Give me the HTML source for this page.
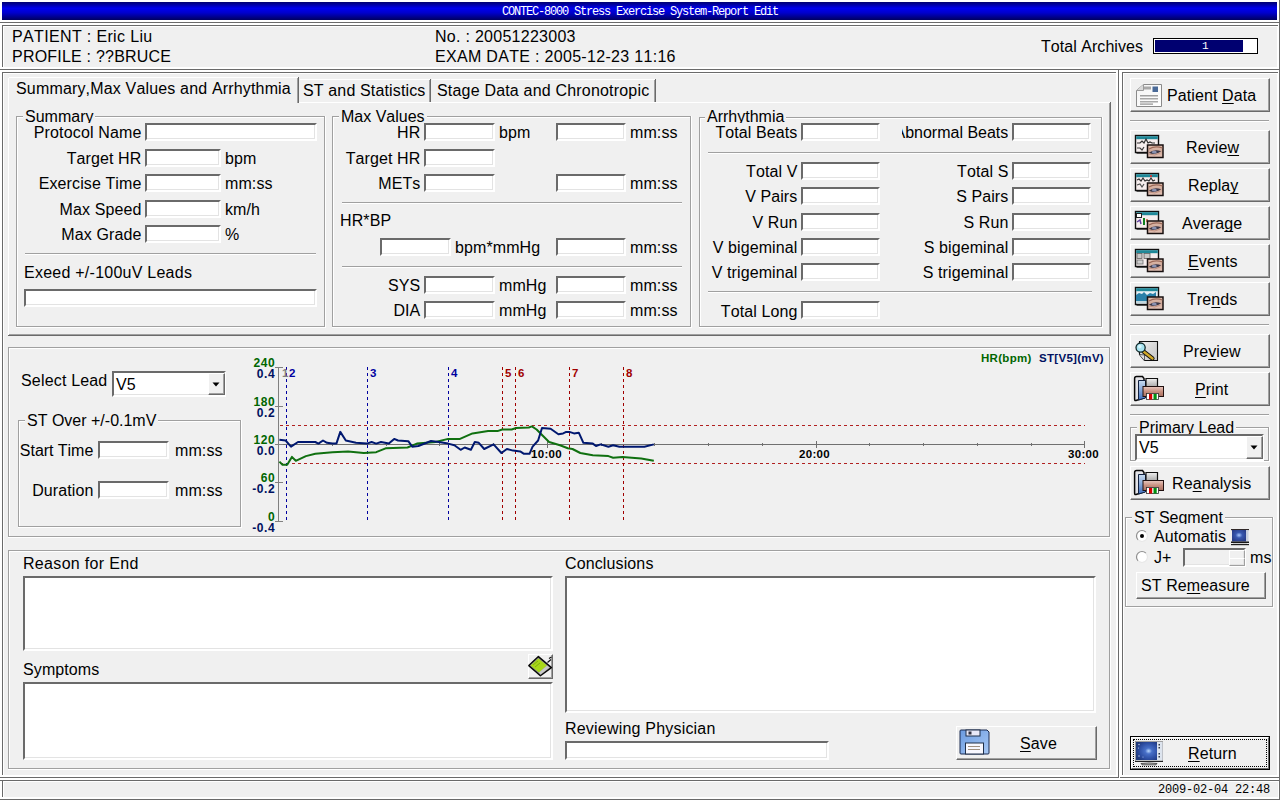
<!DOCTYPE html>
<html><head><meta charset="utf-8"><style>
html,body{margin:0;padding:0;}
body{width:1280px;height:800px;position:relative;overflow:hidden;background:#fff;font-family:"Liberation Sans",sans-serif;}
body div, body span, body svg{position:absolute;}
span{white-space:pre;font-kerning:none;}
u{text-decoration:underline;text-underline-offset:2px;text-decoration-skip-ink:none;}
</style></head><body>
<div style="left:2px;top:2px;width:1275px;height:18px;background:linear-gradient(#000070 0%,#0000ee 35%,#0000cc 60%,#000060 100%);"></div>
<span style="left:502px;top:6.34px;font-size:12px;line-height:12px;color:#fff;font-weight:normal;font-family:'Liberation Mono', monospace;letter-spacing:-1.2px;">CONTEC-8000 Stress Exercise System-Report Edit</span>
<div style="left:1279px;top:0px;width:1px;height:800px;background:#6a6a6a;"></div>
<div style="left:0px;top:22px;width:1280px;height:1px;background:#6a6a6a;"></div>
<div style="left:4px;top:27px;width:1273px;height:40px;background:#f0f0f0;"></div>
<div style="left:2px;top:25px;width:1276px;height:1px;background:#6a6a6a;"></div>
<div style="left:2px;top:25px;width:1px;height:42px;background:#6a6a6a;"></div>
<div style="left:3px;top:26px;width:1274px;height:1px;background:#fff;"></div>
<div style="left:3px;top:26px;width:1px;height:41px;background:#fff;"></div>
<div style="left:0px;top:69px;width:1280px;height:1px;background:#6a6a6a;"></div>
<div style="left:4px;top:74px;width:1112px;height:701px;background:#f0f0f0;"></div>
<div style="left:2px;top:72px;width:1114px;height:1px;background:#6a6a6a;"></div>
<div style="left:2px;top:72px;width:1px;height:703px;background:#6a6a6a;"></div>
<div style="left:3px;top:73px;width:1113px;height:1px;background:#fff;"></div>
<div style="left:3px;top:73px;width:1px;height:702px;background:#fff;"></div>
<div style="left:1118px;top:69px;width:1px;height:709px;background:#6a6a6a;"></div>
<div style="left:0px;top:777px;width:1119px;height:1px;background:#6a6a6a;"></div>
<div style="left:1124px;top:74px;width:153px;height:701px;background:#f0f0f0;"></div>
<div style="left:1122px;top:72px;width:156px;height:1px;background:#6a6a6a;"></div>
<div style="left:1122px;top:72px;width:1px;height:703px;background:#6a6a6a;"></div>
<div style="left:1123px;top:73px;width:154px;height:1px;background:#fff;"></div>
<div style="left:1123px;top:73px;width:1px;height:702px;background:#fff;"></div>
<div style="left:1120px;top:777px;width:160px;height:1px;background:#6a6a6a;"></div>
<div style="left:4px;top:782px;width:1274px;height:15px;background:#f0f0f0;"></div>
<div style="left:0px;top:780px;width:1280px;height:1px;background:#6a6a6a;"></div>
<div style="left:2px;top:780px;width:1px;height:17px;background:#6a6a6a;"></div>
<div style="left:3px;top:781px;width:1275px;height:1px;background:#fff;"></div>
<div style="left:3px;top:781px;width:1px;height:16px;background:#fff;"></div>
<div style="left:0px;top:799px;width:1280px;height:1px;background:#6a6a6a;"></div>
<span style="left:1158px;top:784.34px;font-size:12px;line-height:12px;color:#000;font-weight:normal;font-family:'Liberation Mono', monospace;letter-spacing:-0.2px;">2009-02-04 22:48</span>
<span style="left:12px;top:29.46px;font-size:16px;line-height:16px;color:#000;font-weight:normal;font-family:'Liberation Sans', sans-serif;letter-spacing:0.349px;">PATIENT : Eric Liu</span>
<span style="left:12px;top:49.46px;font-size:16px;line-height:16px;color:#000;font-weight:normal;font-family:'Liberation Sans', sans-serif;letter-spacing:0.212px;">PROFILE : ??BRUCE</span>
<span style="left:435px;top:29.46px;font-size:16px;line-height:16px;color:#000;font-weight:normal;font-family:'Liberation Sans', sans-serif;letter-spacing:0.275px;">No. : 20051223003</span>
<span style="left:435px;top:49.46px;font-size:16px;line-height:16px;color:#000;font-weight:normal;font-family:'Liberation Sans', sans-serif;letter-spacing:0.311px;">EXAM DATE : 2005-12-23 11:16</span>
<span style="left:1041px;top:39.46px;font-size:16px;line-height:16px;color:#000;font-weight:normal;font-family:'Liberation Sans', sans-serif;letter-spacing:0.044px;">Total Archives</span>
<div style="left:1153px;top:38px;width:103px;height:14px;border:1.4px solid #000;background:#fff"></div>
<div style="left:1155px;top:40px;width:88px;height:12px;background:#000070;"></div>
<span style="left:1202px;top:40.69px;font-size:11px;line-height:11px;color:#fff;font-weight:normal;font-family:'Liberation Mono', monospace;">1</span>
<div style="left:8px;top:102px;width:1103px;height:1px;background:#fff;"></div>
<div style="left:8px;top:102px;width:1px;height:234px;background:#fff;"></div>
<div style="left:1110px;top:102px;width:1px;height:234px;background:#6a6a6a;"></div>
<div style="left:1109px;top:103px;width:1px;height:232px;background:#a0a0a0;"></div>
<div style="left:8px;top:335px;width:1103px;height:1px;background:#6a6a6a;"></div>
<div style="left:9px;top:334px;width:1101px;height:1px;background:#a0a0a0;"></div>
<div style="left:300px;top:79px;width:130px;height:1px;background:#fff;"></div>
<div style="left:430px;top:79px;width:1px;height:23px;background:#6a6a6a;"></div>
<div style="left:429px;top:80px;width:1px;height:22px;background:#a0a0a0;"></div>
<div style="left:432px;top:79px;width:223px;height:1px;background:#fff;"></div>
<div style="left:655px;top:79px;width:1px;height:23px;background:#6a6a6a;"></div>
<div style="left:654px;top:80px;width:1px;height:22px;background:#a0a0a0;"></div>
<span style="left:303px;top:83.46px;font-size:16px;line-height:16px;color:#000;font-weight:normal;font-family:'Liberation Sans', sans-serif;letter-spacing:0.141px;">ST and Statistics</span>
<span style="left:437px;top:83.46px;font-size:16px;line-height:16px;color:#000;font-weight:normal;font-family:'Liberation Sans', sans-serif;letter-spacing:0.189px;">Stage Data and Chronotropic</span>
<div style="left:9px;top:78px;width:289px;height:25px;background:#f0f0f0;"></div>
<div style="left:9px;top:77px;width:289px;height:1px;background:#fff;"></div>
<div style="left:8px;top:78px;width:1px;height:25px;background:#fff;"></div>
<div style="left:298px;top:77px;width:1px;height:26px;background:#6a6a6a;"></div>
<div style="left:297px;top:78px;width:1px;height:25px;background:#a0a0a0;"></div>
<span style="left:16px;top:81.46px;font-size:16px;line-height:16px;color:#000;font-weight:normal;font-family:'Liberation Sans', sans-serif;letter-spacing:0.166px;">Summary,Max Values and Arrhythmia</span>
<div style="left:16px;top:116px;width:309px;height:1px;background:#a0a0a0;"></div>
<div style="left:17px;top:117px;width:309px;height:1px;background:#fff;"></div>
<div style="left:16px;top:116px;width:1px;height:211px;background:#a0a0a0;"></div>
<div style="left:17px;top:117px;width:1px;height:211px;background:#fff;"></div>
<div style="left:16px;top:326px;width:309px;height:1px;background:#a0a0a0;"></div>
<div style="left:16px;top:327px;width:310px;height:1px;background:#fff;"></div>
<div style="left:324px;top:116px;width:1px;height:211px;background:#a0a0a0;"></div>
<div style="left:325px;top:116px;width:1px;height:212px;background:#fff;"></div>
<div style="left:23px;top:108px;height:15px;overflow:hidden;background:#f0f0f0;padding:0 2px"><span style="position:relative;display:block;font-size:16px;line-height:16px;margin-top:0.5px">Summary</span></div>
<span style="right:1138.56px;text-align:right;top:125.46px;font-size:16px;line-height:16px;color:#000;font-weight:normal;font-family:'Liberation Sans', sans-serif;letter-spacing:0.142px;">Protocol Name</span>
<div style="left:145px;top:123px;width:168px;height:14px;background:#fff;border-style:solid;border-width:2px;border-color:#6a6a6a #fff #fff #6a6a6a;box-shadow:inset -1px -1px 0 #e3e3e3"></div>
<span style="right:1138.60px;text-align:right;top:151.46px;font-size:16px;line-height:16px;color:#000;font-weight:normal;font-family:'Liberation Sans', sans-serif;letter-spacing:0.100px;">Target HR</span>
<div style="left:145px;top:149px;width:72px;height:14px;background:#fff;border-style:solid;border-width:2px;border-color:#6a6a6a #fff #fff #6a6a6a;box-shadow:inset -1px -1px 0 #e3e3e3"></div>
<span style="left:225px;top:151.46px;font-size:16px;line-height:16px;color:#000;font-weight:normal;font-family:'Liberation Sans', sans-serif;letter-spacing:0.100px;">bpm</span>
<span style="right:1138.60px;text-align:right;top:176.46px;font-size:16px;line-height:16px;color:#000;font-weight:normal;font-family:'Liberation Sans', sans-serif;letter-spacing:0.100px;">Exercise Time</span>
<div style="left:145px;top:174px;width:72px;height:14px;background:#fff;border-style:solid;border-width:2px;border-color:#6a6a6a #fff #fff #6a6a6a;box-shadow:inset -1px -1px 0 #e3e3e3"></div>
<span style="left:225px;top:176.46px;font-size:16px;line-height:16px;color:#000;font-weight:normal;font-family:'Liberation Sans', sans-serif;letter-spacing:0.100px;">mm:ss</span>
<span style="right:1138.60px;text-align:right;top:202.46px;font-size:16px;line-height:16px;color:#000;font-weight:normal;font-family:'Liberation Sans', sans-serif;letter-spacing:0.100px;">Max Speed</span>
<div style="left:145px;top:200px;width:72px;height:14px;background:#fff;border-style:solid;border-width:2px;border-color:#6a6a6a #fff #fff #6a6a6a;box-shadow:inset -1px -1px 0 #e3e3e3"></div>
<span style="left:225px;top:202.46px;font-size:16px;line-height:16px;color:#000;font-weight:normal;font-family:'Liberation Sans', sans-serif;letter-spacing:0.100px;">km/h</span>
<span style="right:1138.60px;text-align:right;top:227.46px;font-size:16px;line-height:16px;color:#000;font-weight:normal;font-family:'Liberation Sans', sans-serif;letter-spacing:0.100px;">Max Grade</span>
<div style="left:145px;top:225px;width:72px;height:14px;background:#fff;border-style:solid;border-width:2px;border-color:#6a6a6a #fff #fff #6a6a6a;box-shadow:inset -1px -1px 0 #e3e3e3"></div>
<span style="left:225px;top:227.46px;font-size:16px;line-height:16px;color:#000;font-weight:normal;font-family:'Liberation Sans', sans-serif;letter-spacing:0.100px;">%</span>
<div style="left:25px;top:253px;width:291px;height:1px;background:#a0a0a0;"></div>
<div style="left:25px;top:254px;width:291px;height:1px;background:#fff;"></div>
<span style="left:24px;top:265.46px;font-size:16px;line-height:16px;color:#000;font-weight:normal;font-family:'Liberation Sans', sans-serif;letter-spacing:0.245px;">Exeed +/-100uV Leads</span>
<div style="left:24px;top:289px;width:289px;height:14px;background:#fff;border-style:solid;border-width:2px;border-color:#6a6a6a #fff #fff #6a6a6a;box-shadow:inset -1px -1px 0 #e3e3e3"></div>
<div style="left:332px;top:116px;width:359px;height:1px;background:#a0a0a0;"></div>
<div style="left:333px;top:117px;width:359px;height:1px;background:#fff;"></div>
<div style="left:332px;top:116px;width:1px;height:211px;background:#a0a0a0;"></div>
<div style="left:333px;top:117px;width:1px;height:211px;background:#fff;"></div>
<div style="left:332px;top:326px;width:359px;height:1px;background:#a0a0a0;"></div>
<div style="left:332px;top:327px;width:360px;height:1px;background:#fff;"></div>
<div style="left:690px;top:116px;width:1px;height:211px;background:#a0a0a0;"></div>
<div style="left:691px;top:116px;width:1px;height:212px;background:#fff;"></div>
<div style="left:339px;top:108px;height:15px;overflow:hidden;background:#f0f0f0;padding:0 2px"><span style="position:relative;display:block;font-size:16px;line-height:16px;margin-top:0.5px">Max Values</span></div>
<span style="right:859.60px;text-align:right;top:125.46px;font-size:16px;line-height:16px;color:#000;font-weight:normal;font-family:'Liberation Sans', sans-serif;letter-spacing:0.100px;">HR</span>
<div style="left:424px;top:123px;width:67px;height:14px;background:#fff;border-style:solid;border-width:2px;border-color:#6a6a6a #fff #fff #6a6a6a;box-shadow:inset -1px -1px 0 #e3e3e3"></div>
<span style="left:499px;top:125.46px;font-size:16px;line-height:16px;color:#000;font-weight:normal;font-family:'Liberation Sans', sans-serif;letter-spacing:0.100px;">bpm</span>
<div style="left:556px;top:123px;width:66px;height:14px;background:#fff;border-style:solid;border-width:2px;border-color:#6a6a6a #fff #fff #6a6a6a;box-shadow:inset -1px -1px 0 #e3e3e3"></div>
<span style="left:630px;top:125.46px;font-size:16px;line-height:16px;color:#000;font-weight:normal;font-family:'Liberation Sans', sans-serif;letter-spacing:0.100px;">mm:ss</span>
<span style="right:859.60px;text-align:right;top:151.46px;font-size:16px;line-height:16px;color:#000;font-weight:normal;font-family:'Liberation Sans', sans-serif;letter-spacing:0.100px;">Target HR</span>
<div style="left:424px;top:149px;width:67px;height:14px;background:#fff;border-style:solid;border-width:2px;border-color:#6a6a6a #fff #fff #6a6a6a;box-shadow:inset -1px -1px 0 #e3e3e3"></div>
<span style="right:859.60px;text-align:right;top:176.46px;font-size:16px;line-height:16px;color:#000;font-weight:normal;font-family:'Liberation Sans', sans-serif;letter-spacing:0.100px;">METs</span>
<div style="left:424px;top:174px;width:67px;height:14px;background:#fff;border-style:solid;border-width:2px;border-color:#6a6a6a #fff #fff #6a6a6a;box-shadow:inset -1px -1px 0 #e3e3e3"></div>
<div style="left:556px;top:174px;width:66px;height:14px;background:#fff;border-style:solid;border-width:2px;border-color:#6a6a6a #fff #fff #6a6a6a;box-shadow:inset -1px -1px 0 #e3e3e3"></div>
<span style="left:630px;top:176.46px;font-size:16px;line-height:16px;color:#000;font-weight:normal;font-family:'Liberation Sans', sans-serif;letter-spacing:0.100px;">mm:ss</span>
<div style="left:342px;top:202px;width:340px;height:1px;background:#a0a0a0;"></div>
<div style="left:342px;top:203px;width:340px;height:1px;background:#fff;"></div>
<span style="left:340px;top:213.46px;font-size:16px;line-height:16px;color:#000;font-weight:normal;font-family:'Liberation Sans', sans-serif;letter-spacing:0.100px;">HR*BP</span>
<div style="left:380px;top:238px;width:67px;height:14px;background:#fff;border-style:solid;border-width:2px;border-color:#6a6a6a #fff #fff #6a6a6a;box-shadow:inset -1px -1px 0 #e3e3e3"></div>
<span style="left:455px;top:240.46px;font-size:16px;line-height:16px;color:#000;font-weight:normal;font-family:'Liberation Sans', sans-serif;letter-spacing:0.100px;">bpm*mmHg</span>
<div style="left:556px;top:238px;width:66px;height:14px;background:#fff;border-style:solid;border-width:2px;border-color:#6a6a6a #fff #fff #6a6a6a;box-shadow:inset -1px -1px 0 #e3e3e3"></div>
<span style="left:630px;top:240.46px;font-size:16px;line-height:16px;color:#000;font-weight:normal;font-family:'Liberation Sans', sans-serif;letter-spacing:0.100px;">mm:ss</span>
<div style="left:342px;top:266px;width:340px;height:1px;background:#a0a0a0;"></div>
<div style="left:342px;top:267px;width:340px;height:1px;background:#fff;"></div>
<span style="right:859.60px;text-align:right;top:278.46px;font-size:16px;line-height:16px;color:#000;font-weight:normal;font-family:'Liberation Sans', sans-serif;letter-spacing:0.100px;">SYS</span>
<div style="left:424px;top:276px;width:67px;height:14px;background:#fff;border-style:solid;border-width:2px;border-color:#6a6a6a #fff #fff #6a6a6a;box-shadow:inset -1px -1px 0 #e3e3e3"></div>
<span style="left:499px;top:278.46px;font-size:16px;line-height:16px;color:#000;font-weight:normal;font-family:'Liberation Sans', sans-serif;letter-spacing:0.100px;">mmHg</span>
<div style="left:556px;top:276px;width:66px;height:14px;background:#fff;border-style:solid;border-width:2px;border-color:#6a6a6a #fff #fff #6a6a6a;box-shadow:inset -1px -1px 0 #e3e3e3"></div>
<span style="left:630px;top:278.46px;font-size:16px;line-height:16px;color:#000;font-weight:normal;font-family:'Liberation Sans', sans-serif;letter-spacing:0.100px;">mm:ss</span>
<span style="right:859.60px;text-align:right;top:303.46px;font-size:16px;line-height:16px;color:#000;font-weight:normal;font-family:'Liberation Sans', sans-serif;letter-spacing:0.100px;">DIA</span>
<div style="left:424px;top:301px;width:67px;height:14px;background:#fff;border-style:solid;border-width:2px;border-color:#6a6a6a #fff #fff #6a6a6a;box-shadow:inset -1px -1px 0 #e3e3e3"></div>
<span style="left:499px;top:303.46px;font-size:16px;line-height:16px;color:#000;font-weight:normal;font-family:'Liberation Sans', sans-serif;letter-spacing:0.100px;">mmHg</span>
<div style="left:556px;top:301px;width:66px;height:14px;background:#fff;border-style:solid;border-width:2px;border-color:#6a6a6a #fff #fff #6a6a6a;box-shadow:inset -1px -1px 0 #e3e3e3"></div>
<span style="left:630px;top:303.46px;font-size:16px;line-height:16px;color:#000;font-weight:normal;font-family:'Liberation Sans', sans-serif;letter-spacing:0.100px;">mm:ss</span>
<div style="left:699px;top:117px;width:403px;height:1px;background:#a0a0a0;"></div>
<div style="left:700px;top:118px;width:403px;height:1px;background:#fff;"></div>
<div style="left:699px;top:117px;width:1px;height:210px;background:#a0a0a0;"></div>
<div style="left:700px;top:118px;width:1px;height:210px;background:#fff;"></div>
<div style="left:699px;top:326px;width:403px;height:1px;background:#a0a0a0;"></div>
<div style="left:699px;top:327px;width:404px;height:1px;background:#fff;"></div>
<div style="left:1101px;top:117px;width:1px;height:210px;background:#a0a0a0;"></div>
<div style="left:1102px;top:117px;width:1px;height:211px;background:#fff;"></div>
<div style="left:705px;top:108px;height:15px;overflow:hidden;background:#f0f0f0;padding:0 2px"><span style="position:relative;display:block;font-size:16px;line-height:16px;margin-top:0.5px">Arrhythmia</span></div>
<span style="right:482.60px;text-align:right;top:125.46px;font-size:16px;line-height:16px;color:#000;font-weight:normal;font-family:'Liberation Sans', sans-serif;letter-spacing:0.100px;">Total Beats</span>
<div style="left:801px;top:123px;width:75px;height:14px;background:#fff;border-style:solid;border-width:2px;border-color:#6a6a6a #fff #fff #6a6a6a;box-shadow:inset -1px -1px 0 #e3e3e3"></div>
<div style="left:902px;top:120px;width:106px;height:22px;overflow:hidden"><span style="right:-0.3px;top:5px;font-size:16px;line-height:16px">Abnormal Beats</span></div>
<div style="left:1012px;top:123px;width:75px;height:14px;background:#fff;border-style:solid;border-width:2px;border-color:#6a6a6a #fff #fff #6a6a6a;box-shadow:inset -1px -1px 0 #e3e3e3"></div>
<div style="left:708px;top:152px;width:384px;height:1px;background:#a0a0a0;"></div>
<div style="left:708px;top:153px;width:384px;height:1px;background:#fff;"></div>
<span style="right:482.60px;text-align:right;top:164.46px;font-size:16px;line-height:16px;color:#000;font-weight:normal;font-family:'Liberation Sans', sans-serif;letter-spacing:0.100px;">Total V</span>
<div style="left:801px;top:162px;width:75px;height:14px;background:#fff;border-style:solid;border-width:2px;border-color:#6a6a6a #fff #fff #6a6a6a;box-shadow:inset -1px -1px 0 #e3e3e3"></div>
<span style="right:271.60px;text-align:right;top:164.46px;font-size:16px;line-height:16px;color:#000;font-weight:normal;font-family:'Liberation Sans', sans-serif;letter-spacing:0.100px;">Total S</span>
<div style="left:1012px;top:162px;width:75px;height:14px;background:#fff;border-style:solid;border-width:2px;border-color:#6a6a6a #fff #fff #6a6a6a;box-shadow:inset -1px -1px 0 #e3e3e3"></div>
<span style="right:482.60px;text-align:right;top:189.46px;font-size:16px;line-height:16px;color:#000;font-weight:normal;font-family:'Liberation Sans', sans-serif;letter-spacing:0.100px;">V Pairs</span>
<div style="left:801px;top:187px;width:75px;height:14px;background:#fff;border-style:solid;border-width:2px;border-color:#6a6a6a #fff #fff #6a6a6a;box-shadow:inset -1px -1px 0 #e3e3e3"></div>
<span style="right:271.60px;text-align:right;top:189.46px;font-size:16px;line-height:16px;color:#000;font-weight:normal;font-family:'Liberation Sans', sans-serif;letter-spacing:0.100px;">S Pairs</span>
<div style="left:1012px;top:187px;width:75px;height:14px;background:#fff;border-style:solid;border-width:2px;border-color:#6a6a6a #fff #fff #6a6a6a;box-shadow:inset -1px -1px 0 #e3e3e3"></div>
<span style="right:482.60px;text-align:right;top:215.46px;font-size:16px;line-height:16px;color:#000;font-weight:normal;font-family:'Liberation Sans', sans-serif;letter-spacing:0.100px;">V Run</span>
<div style="left:801px;top:213px;width:75px;height:14px;background:#fff;border-style:solid;border-width:2px;border-color:#6a6a6a #fff #fff #6a6a6a;box-shadow:inset -1px -1px 0 #e3e3e3"></div>
<span style="right:271.60px;text-align:right;top:215.46px;font-size:16px;line-height:16px;color:#000;font-weight:normal;font-family:'Liberation Sans', sans-serif;letter-spacing:0.100px;">S Run</span>
<div style="left:1012px;top:213px;width:75px;height:14px;background:#fff;border-style:solid;border-width:2px;border-color:#6a6a6a #fff #fff #6a6a6a;box-shadow:inset -1px -1px 0 #e3e3e3"></div>
<span style="right:482.60px;text-align:right;top:240.46px;font-size:16px;line-height:16px;color:#000;font-weight:normal;font-family:'Liberation Sans', sans-serif;letter-spacing:0.100px;">V bigeminal</span>
<div style="left:801px;top:238px;width:75px;height:14px;background:#fff;border-style:solid;border-width:2px;border-color:#6a6a6a #fff #fff #6a6a6a;box-shadow:inset -1px -1px 0 #e3e3e3"></div>
<span style="right:271.60px;text-align:right;top:240.46px;font-size:16px;line-height:16px;color:#000;font-weight:normal;font-family:'Liberation Sans', sans-serif;letter-spacing:0.100px;">S bigeminal</span>
<div style="left:1012px;top:238px;width:75px;height:14px;background:#fff;border-style:solid;border-width:2px;border-color:#6a6a6a #fff #fff #6a6a6a;box-shadow:inset -1px -1px 0 #e3e3e3"></div>
<span style="right:482.60px;text-align:right;top:265.46px;font-size:16px;line-height:16px;color:#000;font-weight:normal;font-family:'Liberation Sans', sans-serif;letter-spacing:0.100px;">V trigeminal</span>
<div style="left:801px;top:263px;width:75px;height:14px;background:#fff;border-style:solid;border-width:2px;border-color:#6a6a6a #fff #fff #6a6a6a;box-shadow:inset -1px -1px 0 #e3e3e3"></div>
<span style="right:271.60px;text-align:right;top:265.46px;font-size:16px;line-height:16px;color:#000;font-weight:normal;font-family:'Liberation Sans', sans-serif;letter-spacing:0.100px;">S trigeminal</span>
<div style="left:1012px;top:263px;width:75px;height:14px;background:#fff;border-style:solid;border-width:2px;border-color:#6a6a6a #fff #fff #6a6a6a;box-shadow:inset -1px -1px 0 #e3e3e3"></div>
<div style="left:708px;top:291px;width:384px;height:1px;background:#a0a0a0;"></div>
<div style="left:708px;top:292px;width:384px;height:1px;background:#fff;"></div>
<span style="right:482.60px;text-align:right;top:304.46px;font-size:16px;line-height:16px;color:#000;font-weight:normal;font-family:'Liberation Sans', sans-serif;letter-spacing:0.100px;">Total Long</span>
<div style="left:801px;top:301px;width:75px;height:14px;background:#fff;border-style:solid;border-width:2px;border-color:#6a6a6a #fff #fff #6a6a6a;box-shadow:inset -1px -1px 0 #e3e3e3"></div>
<div style="left:8px;top:347px;width:1102px;height:1px;background:#a0a0a0;"></div>
<div style="left:8px;top:347px;width:1px;height:191px;background:#a0a0a0;"></div>
<div style="left:9px;top:348px;width:1102px;height:1px;background:#fff;"></div>
<div style="left:9px;top:348px;width:1px;height:190px;background:#fff;"></div>
<div style="left:8px;top:536px;width:1102px;height:1px;background:#a0a0a0;"></div>
<div style="left:1109px;top:347px;width:1px;height:190px;background:#a0a0a0;"></div>
<div style="left:8px;top:537px;width:1103px;height:1px;background:#fff;"></div>
<div style="left:1110px;top:347px;width:1px;height:191px;background:#fff;"></div>
<span style="left:21px;top:373.46px;font-size:16px;line-height:16px;color:#000;font-weight:normal;font-family:'Liberation Sans', sans-serif;letter-spacing:0.175px;">Select Lead</span>
<div style="left:112px;top:371px;width:110px;height:22px;background:#fff;border-style:solid;border-width:2px;border-color:#6a6a6a #fff #fff #6a6a6a;box-shadow:inset -1px -1px 0 #e3e3e3"></div>
<div style="left:208px;top:373px;width:15px;height:20px;background:#f0f0f0;border-style:solid;border-width:1px;border-color:#fff #6a6a6a #6a6a6a #fff;box-shadow:inset -1px -1px 0 #a0a0a0"></div>
<svg style="left:212px;top:382px" width="8" height="5"><path d="M0.5 0.5H7.5L4 4.5Z" fill="#000"/></svg>
<span style="left:116px;top:377.46px;font-size:16px;line-height:16px;color:#000;font-weight:normal;font-family:'Liberation Sans', sans-serif;letter-spacing:0.100px;">V5</span>
<div style="left:18px;top:420px;width:223px;height:1px;background:#a0a0a0;"></div>
<div style="left:19px;top:421px;width:223px;height:1px;background:#fff;"></div>
<div style="left:18px;top:420px;width:1px;height:107px;background:#a0a0a0;"></div>
<div style="left:19px;top:421px;width:1px;height:107px;background:#fff;"></div>
<div style="left:18px;top:526px;width:223px;height:1px;background:#a0a0a0;"></div>
<div style="left:18px;top:527px;width:224px;height:1px;background:#fff;"></div>
<div style="left:240px;top:420px;width:1px;height:107px;background:#a0a0a0;"></div>
<div style="left:241px;top:420px;width:1px;height:108px;background:#fff;"></div>
<div style="left:25px;top:412px;height:15px;overflow:hidden;background:#f0f0f0;padding:0 2px"><span style="position:relative;display:block;font-size:16px;line-height:16px;margin-top:0.5px">ST Over +/-0.1mV</span></div>
<span style="right:1186.74px;text-align:right;top:443.46px;font-size:16px;line-height:16px;color:#000;font-weight:normal;font-family:'Liberation Sans', sans-serif;letter-spacing:-0.039px;">Start Time</span>
<div style="left:98px;top:441px;width:67px;height:14px;background:#fff;border-style:solid;border-width:2px;border-color:#6a6a6a #fff #fff #6a6a6a;box-shadow:inset -1px -1px 0 #e3e3e3"></div>
<span style="left:175px;top:443.46px;font-size:16px;line-height:16px;color:#000;font-weight:normal;font-family:'Liberation Sans', sans-serif;letter-spacing:0.100px;">mm:ss</span>
<span style="right:1186.60px;text-align:right;top:483.46px;font-size:16px;line-height:16px;color:#000;font-weight:normal;font-family:'Liberation Sans', sans-serif;letter-spacing:0.100px;">Duration</span>
<div style="left:98px;top:481px;width:67px;height:14px;background:#fff;border-style:solid;border-width:2px;border-color:#6a6a6a #fff #fff #6a6a6a;box-shadow:inset -1px -1px 0 #e3e3e3"></div>
<span style="left:175px;top:483.46px;font-size:16px;line-height:16px;color:#000;font-weight:normal;font-family:'Liberation Sans', sans-serif;letter-spacing:0.100px;">mm:ss</span>
<svg style="left:0;top:0" width="1280" height="800" viewBox="0 0 1280 800">
<line x1="280" y1="425.5" x2="1085" y2="425.5" stroke="#b02020" stroke-width="1" stroke-dasharray="3 3"/>
<line x1="280" y1="463.5" x2="1085" y2="463.5" stroke="#b02020" stroke-width="1" stroke-dasharray="3 3"/>
<line x1="278" y1="444.5" x2="1085" y2="444.5" stroke="#707070" stroke-width="1"/>
<line x1="278.5" y1="443" x2="278.5" y2="446" stroke="#707070" stroke-width="1"/>
<line x1="332.5" y1="443" x2="332.5" y2="446" stroke="#707070" stroke-width="1"/>
<line x1="386.5" y1="443" x2="386.5" y2="446" stroke="#707070" stroke-width="1"/>
<line x1="439.5" y1="443" x2="439.5" y2="446" stroke="#707070" stroke-width="1"/>
<line x1="493.5" y1="443" x2="493.5" y2="446" stroke="#707070" stroke-width="1"/>
<line x1="547.5" y1="441" x2="547.5" y2="448" stroke="#707070" stroke-width="1"/>
<line x1="601.5" y1="443" x2="601.5" y2="446" stroke="#707070" stroke-width="1"/>
<line x1="654.5" y1="443" x2="654.5" y2="446" stroke="#707070" stroke-width="1"/>
<line x1="708.5" y1="443" x2="708.5" y2="446" stroke="#707070" stroke-width="1"/>
<line x1="762.5" y1="443" x2="762.5" y2="446" stroke="#707070" stroke-width="1"/>
<line x1="816.5" y1="441" x2="816.5" y2="448" stroke="#707070" stroke-width="1"/>
<line x1="869.5" y1="443" x2="869.5" y2="446" stroke="#707070" stroke-width="1"/>
<line x1="923.5" y1="443" x2="923.5" y2="446" stroke="#707070" stroke-width="1"/>
<line x1="977.5" y1="443" x2="977.5" y2="446" stroke="#707070" stroke-width="1"/>
<line x1="1031.5" y1="443" x2="1031.5" y2="446" stroke="#707070" stroke-width="1"/>
<line x1="1084.5" y1="441" x2="1084.5" y2="448" stroke="#707070" stroke-width="1"/>
<line x1="278.5" y1="367" x2="278.5" y2="522" stroke="#808080" stroke-width="1"/>
<line x1="275" y1="367.5" x2="283" y2="367.5" stroke="#808080" stroke-width="1"/>
<line x1="275" y1="406.5" x2="283" y2="406.5" stroke="#808080" stroke-width="1"/>
<line x1="275" y1="444.5" x2="283" y2="444.5" stroke="#808080" stroke-width="1"/>
<line x1="275" y1="482.5" x2="283" y2="482.5" stroke="#808080" stroke-width="1"/>
<line x1="275" y1="521.5" x2="283" y2="521.5" stroke="#808080" stroke-width="1"/>
<line x1="286.5" y1="367" x2="286.5" y2="521" stroke="#0000a0" stroke-width="1" stroke-dasharray="3 3"/>
<line x1="367.5" y1="367" x2="367.5" y2="521" stroke="#0000a0" stroke-width="1" stroke-dasharray="3 3"/>
<line x1="448.5" y1="367" x2="448.5" y2="521" stroke="#0000a0" stroke-width="1" stroke-dasharray="3 3"/>
<line x1="502.5" y1="367" x2="502.5" y2="521" stroke="#a00000" stroke-width="1" stroke-dasharray="3 3"/>
<line x1="515.5" y1="367" x2="515.5" y2="521" stroke="#a00000" stroke-width="1" stroke-dasharray="3 3"/>
<line x1="569.5" y1="367" x2="569.5" y2="521" stroke="#a00000" stroke-width="1" stroke-dasharray="3 3"/>
<line x1="623.5" y1="367" x2="623.5" y2="521" stroke="#a00000" stroke-width="1" stroke-dasharray="3 3"/>
<polyline points="279.4,461.6 282.5,464.7 287.2,464.7 291.9,456.9 295.8,460.8 305.9,456.1 315.3,453.8 332.5,452.2 348.1,451.4 363.8,453.0 376.2,452.2 385.6,448.3 407.5,447.5 416.9,443.6 435.6,442.0 448.1,438.9 460.0,438.9 472.5,433.4 488.1,431.1 497.5,431.1 502.2,429.5 511.6,429.5 516.2,428.0 528.8,427.5 531.9,426.4 536.6,429.5 542.8,435.8 549.1,442.0 560.0,445.2 567.8,448.3 572.5,449.0 580.3,453.0 592.8,455.3 608.4,456.1 613.1,457.7 622.5,456.9 641.2,458.4 653.8,460.8" fill="none" stroke="#107010" stroke-width="2" stroke-linejoin="round"/>
<polyline points="279.4,439.7 285.6,440.5 291.0,446.7 298.0,442.0 315.3,442.0 318.4,443.6 323.0,440.5 327.0,442.8 332.5,443.6 336.4,443.6 340.3,431.9 345.8,440.5 356.0,442.8 366.9,443.6 371.6,442.0 376.2,443.6 381.0,442.0 388.8,443.6 394.2,438.9 398.0,440.5 408.3,441.2 412.2,446.7 418.4,446.0 431.0,441.0 438.8,442.0 448.1,443.6 454.4,445.2 460.6,449.8 464.7,447.5 470.9,449.8 474.8,442.0 478.8,442.8 484.2,449.0 493.6,444.4 501.4,453.0 506.9,449.0 513.1,450.6 520.2,451.4 524.0,453.8 529.5,453.8 532.6,446.7 538.1,440.5 542.0,428.0 550.6,428.8 558.4,434.2 563.1,433.4 566.2,431.9 569.4,431.9 574.0,433.4 578.8,432.7 583.4,442.8 592.8,443.6 596.0,446.0 600.6,444.4 608.4,446.7 613.1,445.2 619.4,446.7 644.4,446.7 653.8,444.4" fill="none" stroke="#001870" stroke-width="2" stroke-linejoin="round"/>
</svg>
<span style="right:1004.70px;text-align:right;top:357.34px;font-size:12px;line-height:12px;color:#006600;font-weight:bold;font-family:'Liberation Sans', sans-serif;letter-spacing:0.6px;">240</span>
<span style="right:1004.70px;text-align:right;top:367.84px;font-size:12px;line-height:12px;color:#001060;font-weight:bold;font-family:'Liberation Sans', sans-serif;letter-spacing:0.6px;">0.4</span>
<span style="right:1004.70px;text-align:right;top:396.34px;font-size:12px;line-height:12px;color:#006600;font-weight:bold;font-family:'Liberation Sans', sans-serif;letter-spacing:0.6px;">180</span>
<span style="right:1004.70px;text-align:right;top:406.84px;font-size:12px;line-height:12px;color:#001060;font-weight:bold;font-family:'Liberation Sans', sans-serif;letter-spacing:0.6px;">0.2</span>
<span style="right:1004.70px;text-align:right;top:434.34px;font-size:12px;line-height:12px;color:#006600;font-weight:bold;font-family:'Liberation Sans', sans-serif;letter-spacing:0.6px;">120</span>
<span style="right:1004.70px;text-align:right;top:444.84px;font-size:12px;line-height:12px;color:#001060;font-weight:bold;font-family:'Liberation Sans', sans-serif;letter-spacing:0.6px;">0.0</span>
<span style="right:1004.70px;text-align:right;top:472.34px;font-size:12px;line-height:12px;color:#006600;font-weight:bold;font-family:'Liberation Sans', sans-serif;letter-spacing:0.6px;">60</span>
<span style="right:1004.70px;text-align:right;top:482.84px;font-size:12px;line-height:12px;color:#001060;font-weight:bold;font-family:'Liberation Sans', sans-serif;letter-spacing:0.6px;">-0.2</span>
<span style="right:1004.70px;text-align:right;top:511.34px;font-size:12px;line-height:12px;color:#006600;font-weight:bold;font-family:'Liberation Sans', sans-serif;letter-spacing:0.6px;">0</span>
<span style="right:1004.70px;text-align:right;top:521.84px;font-size:12px;line-height:12px;color:#001060;font-weight:bold;font-family:'Liberation Sans', sans-serif;letter-spacing:0.6px;">-0.4</span>
<span style="left:282px;top:367.77px;font-size:11.5px;line-height:11.5px;color:#808080;font-weight:bold;font-family:'Liberation Sans', sans-serif;letter-spacing:0.3px;">1</span>
<span style="left:289px;top:367.77px;font-size:11.5px;line-height:11.5px;color:#0000a0;font-weight:bold;font-family:'Liberation Sans', sans-serif;letter-spacing:0.3px;">2</span>
<span style="left:370px;top:367.77px;font-size:11.5px;line-height:11.5px;color:#0000a0;font-weight:bold;font-family:'Liberation Sans', sans-serif;letter-spacing:0.3px;">3</span>
<span style="left:451px;top:367.77px;font-size:11.5px;line-height:11.5px;color:#0000a0;font-weight:bold;font-family:'Liberation Sans', sans-serif;letter-spacing:0.3px;">4</span>
<span style="left:505px;top:367.77px;font-size:11.5px;line-height:11.5px;color:#a00000;font-weight:bold;font-family:'Liberation Sans', sans-serif;letter-spacing:0.3px;">5</span>
<span style="left:518px;top:367.77px;font-size:11.5px;line-height:11.5px;color:#a00000;font-weight:bold;font-family:'Liberation Sans', sans-serif;letter-spacing:0.3px;">6</span>
<span style="left:572px;top:367.77px;font-size:11.5px;line-height:11.5px;color:#a00000;font-weight:bold;font-family:'Liberation Sans', sans-serif;letter-spacing:0.3px;">7</span>
<span style="left:626px;top:367.77px;font-size:11.5px;line-height:11.5px;color:#a00000;font-weight:bold;font-family:'Liberation Sans', sans-serif;letter-spacing:0.3px;">8</span>
<span style="left:531px;top:449.27px;font-size:11.5px;line-height:11.5px;color:#000;font-weight:bold;font-family:'Liberation Sans', sans-serif;letter-spacing:0.3px;">10:00</span>
<span style="left:799px;top:449.27px;font-size:11.5px;line-height:11.5px;color:#000;font-weight:bold;font-family:'Liberation Sans', sans-serif;letter-spacing:0.3px;">20:00</span>
<span style="left:1068px;top:449.27px;font-size:11.5px;line-height:11.5px;color:#000;font-weight:bold;font-family:'Liberation Sans', sans-serif;letter-spacing:0.3px;">30:00</span>
<span style="left:981px;top:352.77px;font-size:11.5px;line-height:11.5px;color:#006600;font-weight:bold;font-family:'Liberation Sans', sans-serif;letter-spacing:0.3px;">HR(bpm)</span>
<span style="left:1039px;top:352.77px;font-size:11.5px;line-height:11.5px;color:#001060;font-weight:bold;font-family:'Liberation Sans', sans-serif;letter-spacing:0.3px;">ST[V5](mV)</span>
<div style="left:8px;top:550px;width:1102px;height:1px;background:#a0a0a0;"></div>
<div style="left:8px;top:550px;width:1px;height:219px;background:#a0a0a0;"></div>
<div style="left:9px;top:551px;width:1102px;height:1px;background:#fff;"></div>
<div style="left:9px;top:551px;width:1px;height:218px;background:#fff;"></div>
<div style="left:8px;top:768px;width:1102px;height:1px;background:#a0a0a0;"></div>
<div style="left:1109px;top:550px;width:1px;height:219px;background:#a0a0a0;"></div>
<div style="left:8px;top:769px;width:1103px;height:1px;background:#fff;"></div>
<div style="left:1110px;top:550px;width:1px;height:220px;background:#fff;"></div>
<span style="left:23px;top:556.46px;font-size:16px;line-height:16px;color:#000;font-weight:normal;font-family:'Liberation Sans', sans-serif;letter-spacing:0.320px;">Reason for End</span>
<div style="left:23px;top:576px;width:526px;height:71px;background:#fff;border-style:solid;border-width:2px;border-color:#6a6a6a #fff #fff #6a6a6a;box-shadow:inset -1px -1px 0 #e3e3e3"></div>
<span style="left:23px;top:662.46px;font-size:16px;line-height:16px;color:#000;font-weight:normal;font-family:'Liberation Sans', sans-serif;letter-spacing:0.105px;">Symptoms</span>
<div style="left:23px;top:682px;width:526px;height:74px;background:#fff;border-style:solid;border-width:2px;border-color:#6a6a6a #fff #fff #6a6a6a;box-shadow:inset -1px -1px 0 #e3e3e3"></div>
<span style="left:565px;top:556.46px;font-size:16px;line-height:16px;color:#000;font-weight:normal;font-family:'Liberation Sans', sans-serif;letter-spacing:0.123px;">Conclusions</span>
<div style="left:565px;top:576px;width:527px;height:133px;background:#fff;border-style:solid;border-width:2px;border-color:#6a6a6a #fff #fff #6a6a6a;box-shadow:inset -1px -1px 0 #e3e3e3"></div>
<span style="left:565px;top:721.46px;font-size:16px;line-height:16px;color:#000;font-weight:normal;font-family:'Liberation Sans', sans-serif;letter-spacing:0.201px;">Reviewing Physician</span>
<div style="left:565px;top:741px;width:260px;height:15px;background:#fff;border-style:solid;border-width:2px;border-color:#6a6a6a #fff #fff #6a6a6a;box-shadow:inset -1px -1px 0 #e3e3e3"></div>
<div style="left:1130px;top:120px;width:139px;height:1px;background:#a0a0a0;"></div>
<div style="left:1130px;top:121px;width:139px;height:1px;background:#fff;"></div>
<div style="left:1130px;top:324px;width:139px;height:1px;background:#a0a0a0;"></div>
<div style="left:1130px;top:325px;width:139px;height:1px;background:#fff;"></div>
<div style="left:1130px;top:414px;width:139px;height:1px;background:#a0a0a0;"></div>
<div style="left:1130px;top:415px;width:139px;height:1px;background:#fff;"></div>
<div style="left:1130px;top:78px;width:138px;height:32px;background:#f0f0f0;border-style:solid;border-width:1px;border-color:#fff #6a6a6a #6a6a6a #fff;box-shadow:inset -1px -1px 0 #a0a0a0"></div>
<span style="left:1167px;top:88.46px;font-size:16px;line-height:16px;color:#000;font-weight:normal;font-family:'Liberation Sans', sans-serif;letter-spacing:0.100px;">Patient <u>D</u>ata</span>
<div style="left:1130px;top:130px;width:138px;height:32px;background:#f0f0f0;border-style:solid;border-width:1px;border-color:#fff #6a6a6a #6a6a6a #fff;box-shadow:inset -1px -1px 0 #a0a0a0"></div>
<span style="left:1186px;top:140.46px;font-size:16px;line-height:16px;color:#000;font-weight:normal;font-family:'Liberation Sans', sans-serif;letter-spacing:0.100px;">Revie<u>w</u></span>
<div style="left:1130px;top:168px;width:138px;height:32px;background:#f0f0f0;border-style:solid;border-width:1px;border-color:#fff #6a6a6a #6a6a6a #fff;box-shadow:inset -1px -1px 0 #a0a0a0"></div>
<span style="left:1188px;top:178.46px;font-size:16px;line-height:16px;color:#000;font-weight:normal;font-family:'Liberation Sans', sans-serif;letter-spacing:0.100px;">Repla<u>y</u></span>
<div style="left:1130px;top:206px;width:138px;height:32px;background:#f0f0f0;border-style:solid;border-width:1px;border-color:#fff #6a6a6a #6a6a6a #fff;box-shadow:inset -1px -1px 0 #a0a0a0"></div>
<span style="left:1182px;top:216.46px;font-size:16px;line-height:16px;color:#000;font-weight:normal;font-family:'Liberation Sans', sans-serif;letter-spacing:0.100px;">Avera<u>g</u>e</span>
<div style="left:1130px;top:244px;width:138px;height:32px;background:#f0f0f0;border-style:solid;border-width:1px;border-color:#fff #6a6a6a #6a6a6a #fff;box-shadow:inset -1px -1px 0 #a0a0a0"></div>
<span style="left:1188px;top:254.46px;font-size:16px;line-height:16px;color:#000;font-weight:normal;font-family:'Liberation Sans', sans-serif;letter-spacing:0.100px;"><u>E</u>vents</span>
<div style="left:1130px;top:282px;width:138px;height:32px;background:#f0f0f0;border-style:solid;border-width:1px;border-color:#fff #6a6a6a #6a6a6a #fff;box-shadow:inset -1px -1px 0 #a0a0a0"></div>
<span style="left:1187px;top:292.46px;font-size:16px;line-height:16px;color:#000;font-weight:normal;font-family:'Liberation Sans', sans-serif;letter-spacing:0.100px;">Tre<u>n</u>ds</span>
<div style="left:1130px;top:334px;width:138px;height:32px;background:#f0f0f0;border-style:solid;border-width:1px;border-color:#fff #6a6a6a #6a6a6a #fff;box-shadow:inset -1px -1px 0 #a0a0a0"></div>
<span style="left:1183px;top:344.46px;font-size:16px;line-height:16px;color:#000;font-weight:normal;font-family:'Liberation Sans', sans-serif;letter-spacing:0.100px;">Pre<u>v</u>iew</span>
<div style="left:1130px;top:372px;width:138px;height:32px;background:#f0f0f0;border-style:solid;border-width:1px;border-color:#fff #6a6a6a #6a6a6a #fff;box-shadow:inset -1px -1px 0 #a0a0a0"></div>
<span style="left:1195px;top:382.46px;font-size:16px;line-height:16px;color:#000;font-weight:normal;font-family:'Liberation Sans', sans-serif;letter-spacing:0.100px;"><u>P</u>rint</span>
<div style="left:1130px;top:427px;width:139px;height:1px;background:#a0a0a0;"></div>
<div style="left:1131px;top:428px;width:139px;height:1px;background:#fff;"></div>
<div style="left:1130px;top:427px;width:1px;height:34px;background:#a0a0a0;"></div>
<div style="left:1131px;top:428px;width:1px;height:34px;background:#fff;"></div>
<div style="left:1130px;top:460px;width:139px;height:1px;background:#a0a0a0;"></div>
<div style="left:1130px;top:461px;width:140px;height:1px;background:#fff;"></div>
<div style="left:1268px;top:427px;width:1px;height:34px;background:#a0a0a0;"></div>
<div style="left:1269px;top:427px;width:1px;height:35px;background:#fff;"></div>
<div style="left:1137px;top:419px;height:15px;overflow:hidden;background:#f0f0f0;padding:0 2px"><span style="position:relative;display:block;font-size:16px;line-height:16px;margin-top:0.5px">Primary Lead</span></div>
<div style="left:1135px;top:434px;width:125px;height:23px;background:#fff;border-style:solid;border-width:2px;border-color:#6a6a6a #fff #fff #6a6a6a;box-shadow:inset -1px -1px 0 #e3e3e3"></div>
<div style="left:1246px;top:436px;width:15px;height:21px;background:#f0f0f0;border-style:solid;border-width:1px;border-color:#fff #6a6a6a #6a6a6a #fff;box-shadow:inset -1px -1px 0 #a0a0a0"></div>
<svg style="left:1250px;top:445px" width="8" height="5"><path d="M0.5 0.5H7.5L4 4.5Z" fill="#000"/></svg>
<span style="left:1139px;top:440.46px;font-size:16px;line-height:16px;color:#000;font-weight:normal;font-family:'Liberation Sans', sans-serif;letter-spacing:0.100px;">V5</span>
<div style="left:1130px;top:466px;width:138px;height:32px;background:#f0f0f0;border-style:solid;border-width:1px;border-color:#fff #6a6a6a #6a6a6a #fff;box-shadow:inset -1px -1px 0 #a0a0a0"></div>
<span style="left:1172px;top:476.46px;font-size:16px;line-height:16px;color:#000;font-weight:normal;font-family:'Liberation Sans', sans-serif;letter-spacing:0.100px;">Re<u>a</u>nalysis</span>
<div style="left:1125px;top:517px;width:148px;height:1px;background:#a0a0a0;"></div>
<div style="left:1126px;top:518px;width:148px;height:1px;background:#fff;"></div>
<div style="left:1125px;top:517px;width:1px;height:90px;background:#a0a0a0;"></div>
<div style="left:1126px;top:518px;width:1px;height:90px;background:#fff;"></div>
<div style="left:1125px;top:606px;width:148px;height:1px;background:#a0a0a0;"></div>
<div style="left:1125px;top:607px;width:149px;height:1px;background:#fff;"></div>
<div style="left:1272px;top:517px;width:1px;height:90px;background:#a0a0a0;"></div>
<div style="left:1273px;top:517px;width:1px;height:91px;background:#fff;"></div>
<div style="left:1132px;top:509px;height:15px;overflow:hidden;background:#f0f0f0;padding:0 2px"><span style="position:relative;display:block;font-size:16px;line-height:16px;margin-top:0.5px">ST Segment</span></div>
<svg style="left:1135px;top:529px" width="14" height="14"><circle cx="7" cy="7" r="5" fill="#fff"/><path d="M3.1 10.9A5.3 5.3 0 0 1 10.9 3.1" fill="none" stroke="#909090" stroke-width="1.2"/><path d="M3.1 10.9A5.3 5.3 0 0 0 10.9 3.1" fill="none" stroke="#e8e8e8" stroke-width="1.2"/><circle cx="7" cy="7" r="2" fill="#000"/></svg>
<svg style="left:1135px;top:550px" width="14" height="14"><circle cx="7" cy="7" r="5" fill="#fff"/><path d="M3.1 10.9A5.3 5.3 0 0 1 10.9 3.1" fill="none" stroke="#909090" stroke-width="1.2"/><path d="M3.1 10.9A5.3 5.3 0 0 0 10.9 3.1" fill="none" stroke="#e8e8e8" stroke-width="1.2"/></svg>
<span style="left:1154px;top:529.46px;font-size:16px;line-height:16px;color:#000;font-weight:normal;font-family:'Liberation Sans', sans-serif;letter-spacing:0.100px;">Automatis</span>
<span style="left:1154px;top:550.46px;font-size:16px;line-height:16px;color:#000;font-weight:normal;font-family:'Liberation Sans', sans-serif;letter-spacing:0.100px;">J+</span>
<div style="left:1183px;top:548px;width:59px;height:15px;background:#f0f0f0;border-style:solid;border-width:2px;border-color:#6a6a6a #fff #fff #6a6a6a;box-shadow:inset -1px -1px 0 #e3e3e3"></div>
<div style="left:1229px;top:550px;width:14px;height:7px;border-style:solid;border-width:1px;border-color:#fff #a0a0a0 #a0a0a0 #fff"></div>
<div style="left:1229px;top:558px;width:14px;height:6px;border-style:solid;border-width:1px;border-color:#fff #a0a0a0 #a0a0a0 #fff"></div>
<span style="left:1250px;top:550.46px;font-size:16px;line-height:16px;color:#000;font-weight:normal;font-family:'Liberation Sans', sans-serif;letter-spacing:0.100px;">ms</span>
<div style="left:1136px;top:572px;width:128px;height:25px;background:#f0f0f0;border-style:solid;border-width:1px;border-color:#fff #6a6a6a #6a6a6a #fff;box-shadow:inset -1px -1px 0 #a0a0a0"></div>
<span style="left:1141px;top:578.46px;font-size:16px;line-height:16px;color:#000;font-weight:normal;font-family:'Liberation Sans', sans-serif;letter-spacing:0.100px;">ST Re<u>m</u>easure</span>
<div style="left:1130px;top:736px;width:138px;height:32px;border:1px solid #000;background:#f0f0f0"></div>
<div style="left:1131px;top:737px;width:136px;height:30px;border-style:solid;border-width:1px;border-color:#fff #6a6a6a #6a6a6a #fff"></div>
<div style="left:1133px;top:739px;width:132px;height:26px;border:1px dotted #000"></div>
<span style="left:1188px;top:746.46px;font-size:16px;line-height:16px;color:#000;font-weight:normal;font-family:'Liberation Sans', sans-serif;letter-spacing:0.100px;"><u>R</u>eturn</span>
<div style="left:956px;top:726px;width:139px;height:32px;background:#f0f0f0;border-style:solid;border-width:1px;border-color:#fff #6a6a6a #6a6a6a #fff;box-shadow:inset -1px -1px 0 #a0a0a0"></div>
<span style="left:1020px;top:736.46px;font-size:16px;line-height:16px;color:#000;font-weight:normal;font-family:'Liberation Sans', sans-serif;letter-spacing:0.100px;"><u>S</u>ave</span>
<div style="left:528px;top:654px;width:23px;height:23px;background:#f0f0f0;border-style:solid;border-width:1px;border-color:#fff #6a6a6a #6a6a6a #fff;box-shadow:inset -1px -1px 0 #a0a0a0"></div>
<svg style="left:1136px;top:84px" width="28" height="24" viewBox="0 0 28 24">
<defs><linearGradient id="pdg" x1="0" y1="0" x2="1" y2="1"><stop offset="0" stop-color="#f4f4f4"/><stop offset="1" stop-color="#ffffff"/></linearGradient></defs>
<path d="M7.5 0.5H25.5V22.5H0.5V6.5Z" fill="url(#pdg)" stroke="#8a8a8a" stroke-width="1"/>
<path d="M0.5 6.5H7.5V0.5" fill="#d8d8d8" stroke="#9a9a9a" stroke-width="1"/>
<rect x="8" y="2.5" width="7" height="3" fill="#a8a8a8"/>
<rect x="16.5" y="2.5" width="5.5" height="5.5" fill="#4a6a98"/>
<rect x="4" y="11" width="18" height="1.5" fill="#a0a0a0"/>
<rect x="4" y="14" width="18" height="1.5" fill="#a8a8a8"/>
<rect x="4" y="17" width="18" height="1.5" fill="#a8a8a8"/>
<rect x="4" y="19.5" width="13" height="1.2" fill="#909090"/>
</svg>
<svg style="left:1134px;top:134px" width="31" height="25" viewBox="0 0 31 25">
<rect x="1.5" y="1.5" width="23" height="17" fill="#f6eeee" stroke="#101010" stroke-width="1.4"/>
<rect x="2.2" y="2.2" width="21.6" height="3" fill="#1f8898"/>
<polyline points="3,9 6,9 8,7 10,9 12,5 14,9 16,8 18,9 21,9" fill="none" stroke="#303030" stroke-width="1.2"/><polyline points="3,14 6,14 8,16 10,13" fill="none" stroke="#404040" stroke-width="1.2"/>
<rect x="2.5" y="19" width="22" height="1" fill="#505050"/>
<defs><linearGradient id="egreview" x1="0" y1="0" x2="0" y2="1"><stop offset="0" stop-color="#e0c0b0"/><stop offset="0.5" stop-color="#d0a898"/><stop offset="1" stop-color="#e4c4b8"/></linearGradient></defs>
<rect x="13.5" y="11" width="15.5" height="12.5" fill="url(#egreview)" stroke="#181010" stroke-width="1.5"/>
<path d="M15 15Q21 11.5 28.5 14" stroke="#9a6858" stroke-width="1.2" fill="none"/>
<path d="M14.8 18.8Q20 14.6 27.2 17.2Q21 21.8 14.8 18.8Z" fill="#3c3848"/>
<ellipse cx="20.3" cy="18.2" rx="2.4" ry="1.4" fill="#8890b0"/>
<path d="M15 20Q21 22.5 26 19" stroke="#b88878" stroke-width="0.8" fill="none"/>
</svg>
<svg style="left:1134px;top:172px" width="31" height="25" viewBox="0 0 31 25">
<rect x="1.5" y="1.5" width="23" height="17" fill="#f6eeee" stroke="#101010" stroke-width="1.4"/>
<rect x="2.2" y="2.2" width="21.6" height="3" fill="#1f8898"/>
<polyline points="3,8 5,7 7,9 9,6 11,9 13,8 15,9 17,6 19,9 21,8" fill="none" stroke="#303030" stroke-width="1.2"/><polyline points="3,13 6,12 8,15 10,12" fill="none" stroke="#505050" stroke-width="1.2"/><rect x="16" y="3" width="2" height="2" fill="#c04040"/>
<rect x="2.5" y="19" width="22" height="1" fill="#505050"/>
<defs><linearGradient id="egreplay" x1="0" y1="0" x2="0" y2="1"><stop offset="0" stop-color="#e0c0b0"/><stop offset="0.5" stop-color="#d0a898"/><stop offset="1" stop-color="#e4c4b8"/></linearGradient></defs>
<rect x="13.5" y="11" width="15.5" height="12.5" fill="url(#egreplay)" stroke="#181010" stroke-width="1.5"/>
<path d="M15 15Q21 11.5 28.5 14" stroke="#9a6858" stroke-width="1.2" fill="none"/>
<path d="M14.8 18.8Q20 14.6 27.2 17.2Q21 21.8 14.8 18.8Z" fill="#3c3848"/>
<ellipse cx="20.3" cy="18.2" rx="2.4" ry="1.4" fill="#8890b0"/>
<path d="M15 20Q21 22.5 26 19" stroke="#b88878" stroke-width="0.8" fill="none"/>
</svg>
<svg style="left:1134px;top:210px" width="31" height="25" viewBox="0 0 31 25">
<rect x="1.5" y="1.5" width="23" height="17" fill="#f6eeee" stroke="#101010" stroke-width="1.4"/>
<rect x="2.2" y="2.2" width="21.6" height="3" fill="#1f8898"/>
<rect x="2.5" y="3.5" width="5" height="4" fill="#fff" stroke="#202020"/><path d="M3 12L6 10L7 14" stroke="#6040a0" stroke-width="1.5" fill="none"/><path d="M10 8V15" stroke="#108020" stroke-width="2"/><path d="M13 9V12" stroke="#c06030" stroke-width="1.5"/>
<rect x="2.5" y="19" width="22" height="1" fill="#505050"/>
<defs><linearGradient id="egaverage" x1="0" y1="0" x2="0" y2="1"><stop offset="0" stop-color="#e0c0b0"/><stop offset="0.5" stop-color="#d0a898"/><stop offset="1" stop-color="#e4c4b8"/></linearGradient></defs>
<rect x="13.5" y="11" width="15.5" height="12.5" fill="url(#egaverage)" stroke="#181010" stroke-width="1.5"/>
<path d="M15 15Q21 11.5 28.5 14" stroke="#9a6858" stroke-width="1.2" fill="none"/>
<path d="M14.8 18.8Q20 14.6 27.2 17.2Q21 21.8 14.8 18.8Z" fill="#3c3848"/>
<ellipse cx="20.3" cy="18.2" rx="2.4" ry="1.4" fill="#8890b0"/>
<path d="M15 20Q21 22.5 26 19" stroke="#b88878" stroke-width="0.8" fill="none"/>
</svg>
<svg style="left:1134px;top:248px" width="31" height="25" viewBox="0 0 31 25">
<rect x="1.5" y="1.5" width="23" height="17" fill="#f6eeee" stroke="#101010" stroke-width="1.4"/>
<rect x="2.2" y="2.2" width="21.6" height="3" fill="#1f8898"/>
<rect x="3" y="5.5" width="5" height="5" fill="#c8c8c8" stroke="#606060" stroke-width="0.8"/><rect x="10" y="5.5" width="6" height="5" fill="#c8c8c8" stroke="#606060" stroke-width="0.8"/><rect x="3" y="12" width="6" height="4" fill="#d0d0d0" stroke="#707070" stroke-width="0.8"/>
<rect x="2.5" y="19" width="22" height="1" fill="#505050"/>
<defs><linearGradient id="egevents" x1="0" y1="0" x2="0" y2="1"><stop offset="0" stop-color="#e0c0b0"/><stop offset="0.5" stop-color="#d0a898"/><stop offset="1" stop-color="#e4c4b8"/></linearGradient></defs>
<rect x="13.5" y="11" width="15.5" height="12.5" fill="url(#egevents)" stroke="#181010" stroke-width="1.5"/>
<path d="M15 15Q21 11.5 28.5 14" stroke="#9a6858" stroke-width="1.2" fill="none"/>
<path d="M14.8 18.8Q20 14.6 27.2 17.2Q21 21.8 14.8 18.8Z" fill="#3c3848"/>
<ellipse cx="20.3" cy="18.2" rx="2.4" ry="1.4" fill="#8890b0"/>
<path d="M15 20Q21 22.5 26 19" stroke="#b88878" stroke-width="0.8" fill="none"/>
</svg>
<svg style="left:1134px;top:286px" width="31" height="25" viewBox="0 0 31 25">
<rect x="1.5" y="1.5" width="23" height="17" fill="#e8f0f4" stroke="#101010" stroke-width="1.4"/>
<rect x="2.2" y="2.2" width="21.6" height="3" fill="#1f8898"/>
<path d="M2 9L5 7L8 8L10 6L13 9L16 7L19 8L22 6V15H2Z" fill="#2a80a8"/><rect x="2" y="15" width="20" height="2" fill="#c0d8e0"/>
<rect x="2.5" y="19" width="22" height="1" fill="#505050"/>
<defs><linearGradient id="egtrends" x1="0" y1="0" x2="0" y2="1"><stop offset="0" stop-color="#e0c0b0"/><stop offset="0.5" stop-color="#d0a898"/><stop offset="1" stop-color="#e4c4b8"/></linearGradient></defs>
<rect x="13.5" y="11" width="15.5" height="12.5" fill="url(#egtrends)" stroke="#181010" stroke-width="1.5"/>
<path d="M15 15Q21 11.5 28.5 14" stroke="#9a6858" stroke-width="1.2" fill="none"/>
<path d="M14.8 18.8Q20 14.6 27.2 17.2Q21 21.8 14.8 18.8Z" fill="#3c3848"/>
<ellipse cx="20.3" cy="18.2" rx="2.4" ry="1.4" fill="#8890b0"/>
<path d="M15 20Q21 22.5 26 19" stroke="#b88878" stroke-width="0.8" fill="none"/>
</svg>
<svg style="left:1135px;top:340px" width="26" height="24" viewBox="0 0 26 24">
<defs><linearGradient id="pvg" x1="0" y1="0" x2="1" y2="1"><stop offset="0" stop-color="#f4f4f4"/><stop offset="0.5" stop-color="#d8d8d8"/><stop offset="1" stop-color="#c8c8c8"/></linearGradient></defs>
<path d="M4.5 1.5H22.5V20.5H9.5L4.5 14.5Z" fill="url(#pvg)" stroke="#101010" stroke-width="1.1"/>
<path d="M4.5 14.5L9.5 15V20.5" fill="#e0e0e0" stroke="#404040" stroke-width="0.8"/>
<path d="M8.5 11.5L17.5 18.5" stroke="#101010" stroke-width="4.2" stroke-linecap="round"/>
<path d="M8.5 11.5L17.5 18.5" stroke="#d0a828" stroke-width="2.4" stroke-linecap="round"/>
<circle cx="5.6" cy="7.6" r="4.6" fill="#a8e4f0" stroke="#102828" stroke-width="1.3"/>
<circle cx="4.8" cy="6.6" r="1.8" fill="#d8f6fc"/>
</svg>
<svg style="left:1132px;top:374px" width="34" height="30" viewBox="0 0 34 30">
<defs><linearGradient id="ptg374" x1="0" y1="0" x2="0" y2="1"><stop offset="0" stop-color="#f0f0f0"/><stop offset="1" stop-color="#a8a8a8"/></linearGradient>
<linearGradient id="pbg374" x1="0" y1="0" x2="0" y2="1"><stop offset="0" stop-color="#e8c8c0"/><stop offset="0.5" stop-color="#c89080"/><stop offset="1" stop-color="#a87060"/></linearGradient>
<linearGradient id="pfg374" x1="0" y1="0" x2="0" y2="1"><stop offset="0" stop-color="#c8dcf0"/><stop offset="1" stop-color="#4070c0"/></linearGradient></defs>
<path d="M2.6 4.5Q2.6 2.5 4.6 2.5H10.5L12 4.5V24L4 26.5Q2.6 27 2.6 25Z" fill="#e4e4e8" stroke="#080808" stroke-width="1.5"/>
<path d="M6.5 6.5H13.5V24L6.5 26Z" fill="url(#pfg374)" stroke="#102040" stroke-width="1"/>
<path d="M14 4.5H25.5V13H14Z" fill="url(#ptg374)" stroke="#101010" stroke-width="1.2"/>
<rect x="11" y="12.5" width="20.5" height="10" fill="url(#pbg374)" stroke="#201010" stroke-width="1"/>
<rect x="14.5" y="19.5" width="12" height="6" fill="#fff" stroke="#303030" stroke-width="0.8"/>
<rect x="17" y="20" width="3.2" height="5.5" fill="#d80000"/>
<rect x="21.5" y="20" width="3.2" height="5.5" fill="#009010"/>
</svg>
<svg style="left:1132px;top:468px" width="34" height="30" viewBox="0 0 34 30">
<defs><linearGradient id="ptg468" x1="0" y1="0" x2="0" y2="1"><stop offset="0" stop-color="#f0f0f0"/><stop offset="1" stop-color="#a8a8a8"/></linearGradient>
<linearGradient id="pbg468" x1="0" y1="0" x2="0" y2="1"><stop offset="0" stop-color="#e8c8c0"/><stop offset="0.5" stop-color="#c89080"/><stop offset="1" stop-color="#a87060"/></linearGradient>
<linearGradient id="pfg468" x1="0" y1="0" x2="0" y2="1"><stop offset="0" stop-color="#c8dcf0"/><stop offset="1" stop-color="#4070c0"/></linearGradient></defs>
<path d="M2.6 4.5Q2.6 2.5 4.6 2.5H10.5L12 4.5V24L4 26.5Q2.6 27 2.6 25Z" fill="#e4e4e8" stroke="#080808" stroke-width="1.5"/>
<path d="M6.5 6.5H13.5V24L6.5 26Z" fill="url(#pfg468)" stroke="#102040" stroke-width="1"/>
<path d="M14 4.5H25.5V13H14Z" fill="url(#ptg468)" stroke="#101010" stroke-width="1.2"/>
<rect x="11" y="12.5" width="20.5" height="10" fill="url(#pbg468)" stroke="#201010" stroke-width="1"/>
<rect x="14.5" y="19.5" width="12" height="6" fill="#fff" stroke="#303030" stroke-width="0.8"/>
<rect x="17" y="20" width="3.2" height="5.5" fill="#d80000"/>
<rect x="21.5" y="20" width="3.2" height="5.5" fill="#009010"/>
</svg>
<svg style="left:1135px;top:741px" width="30" height="25" viewBox="0 0 30 25">
<defs><radialGradient id="mg1135" cx="0.6" cy="0.5" r="0.65"><stop offset="0" stop-color="#b8d8ff"/><stop offset="0.25" stop-color="#4870c8"/><stop offset="0.7" stop-color="#2c4ca0"/><stop offset="1" stop-color="#203878"/></radialGradient></defs>
<rect x="0.5" y="0.5" width="27" height="19.5" fill="#e0e4e8" stroke="#909090" stroke-width="0.8"/>
<rect x="1" y="1" width="21" height="18" fill="url(#mg1135)"/>
<circle cx="4" cy="3.5" r="0.7" fill="#c0d0f0"/><circle cx="3.5" cy="7" r="0.6" fill="#b0c8f0"/><circle cx="4" cy="15" r="0.7" fill="#c0d0f0"/><circle cx="8" cy="16" r="0.6" fill="#a0b8e8"/>
<rect x="22" y="1" width="5.5" height="18" fill="#dde4ee"/>
<rect x="23.5" y="3" width="1.5" height="1.5" fill="#303848"/><rect x="23.5" y="6" width="1.5" height="1.5" fill="#303848"/><rect x="23.5" y="12" width="1.5" height="1.5" fill="#303848"/><rect x="23.5" y="15" width="1.5" height="1.5" fill="#303848"/>
<path d="M0 20.5H28" stroke="#202020" stroke-width="1"/>
<path d="M6 22.5Q14 21.5 22 22.5L21 23.8H7Z" fill="#d0d0d0" stroke="#303030" stroke-width="0.8"/>
</svg>
<svg style="left:1231px;top:528px" width="18" height="18" viewBox="0 0 18 18">
<defs><radialGradient id="smg" cx="0.5" cy="0.45" r="0.6"><stop offset="0" stop-color="#a8c8ff"/><stop offset="0.4" stop-color="#3858b0"/><stop offset="1" stop-color="#283c88"/></radialGradient></defs>
<rect x="0" y="1" width="18" height="1.2" fill="#302828"/>
<rect x="1" y="2" width="14" height="11.5" fill="url(#smg)"/>
<rect x="15" y="2" width="2.5" height="11.5" fill="#c8d0e0"/>
<rect x="0" y="13.5" width="18" height="1.5" fill="#181818"/>
<rect x="2" y="15" width="14" height="1" fill="#d0d0d0"/>
<rect x="0" y="16" width="18" height="1.2" fill="#202020"/>
</svg>
<svg style="left:959px;top:729px" width="31" height="26" viewBox="0 0 31 26">
<defs><linearGradient id="svg1" x1="0" y1="0" x2="1" y2="1"><stop offset="0" stop-color="#6a9ae0"/><stop offset="1" stop-color="#a8c8f4"/></linearGradient></defs>
<path d="M1 2Q1 1 2 1H28L30 3V24Q30 25 29 25H2Q1 25 1 24Z" fill="url(#svg1)" stroke="#1a2a50" stroke-width="1"/>
<rect x="7" y="1" width="14" height="6" fill="#e8e8f8" stroke="#20304a" stroke-width="1"/>
<rect x="9.5" y="2.5" width="3" height="3" fill="#303040"/>
<rect x="6.5" y="14" width="18" height="11" fill="#f8f8ff" stroke="#20304a" stroke-width="1"/>
<rect x="9" y="17" width="12" height="1" fill="#a09080"/>
<rect x="9" y="20" width="12" height="1" fill="#a09080"/>
</svg>
<svg style="left:528px;top:655px" width="25" height="23" viewBox="0 0 25 23">
<path d="M0.8 10.6L10.4 1.6L23.4 12.6L12.4 20.8Z" fill="#909090" stroke="#080808" stroke-width="1.4" stroke-linejoin="round"/>
<path d="M2.5 10.5L10.4 3.4L19 10.6L11 17.6Z" fill="#a8d818"/>
<path d="M11 17.6L19 10.6L21.5 12.6L12.6 19.4Z" fill="#c8c8c8"/>
<path d="M5 10L10 6M7 12L12 8" stroke="#78a010" stroke-width="0.8"/>
<path d="M19.5 7.5L23 4.5M21 3.5L23.5 2" stroke="#101010" stroke-width="1.2"/>
</svg>
</body></html>
